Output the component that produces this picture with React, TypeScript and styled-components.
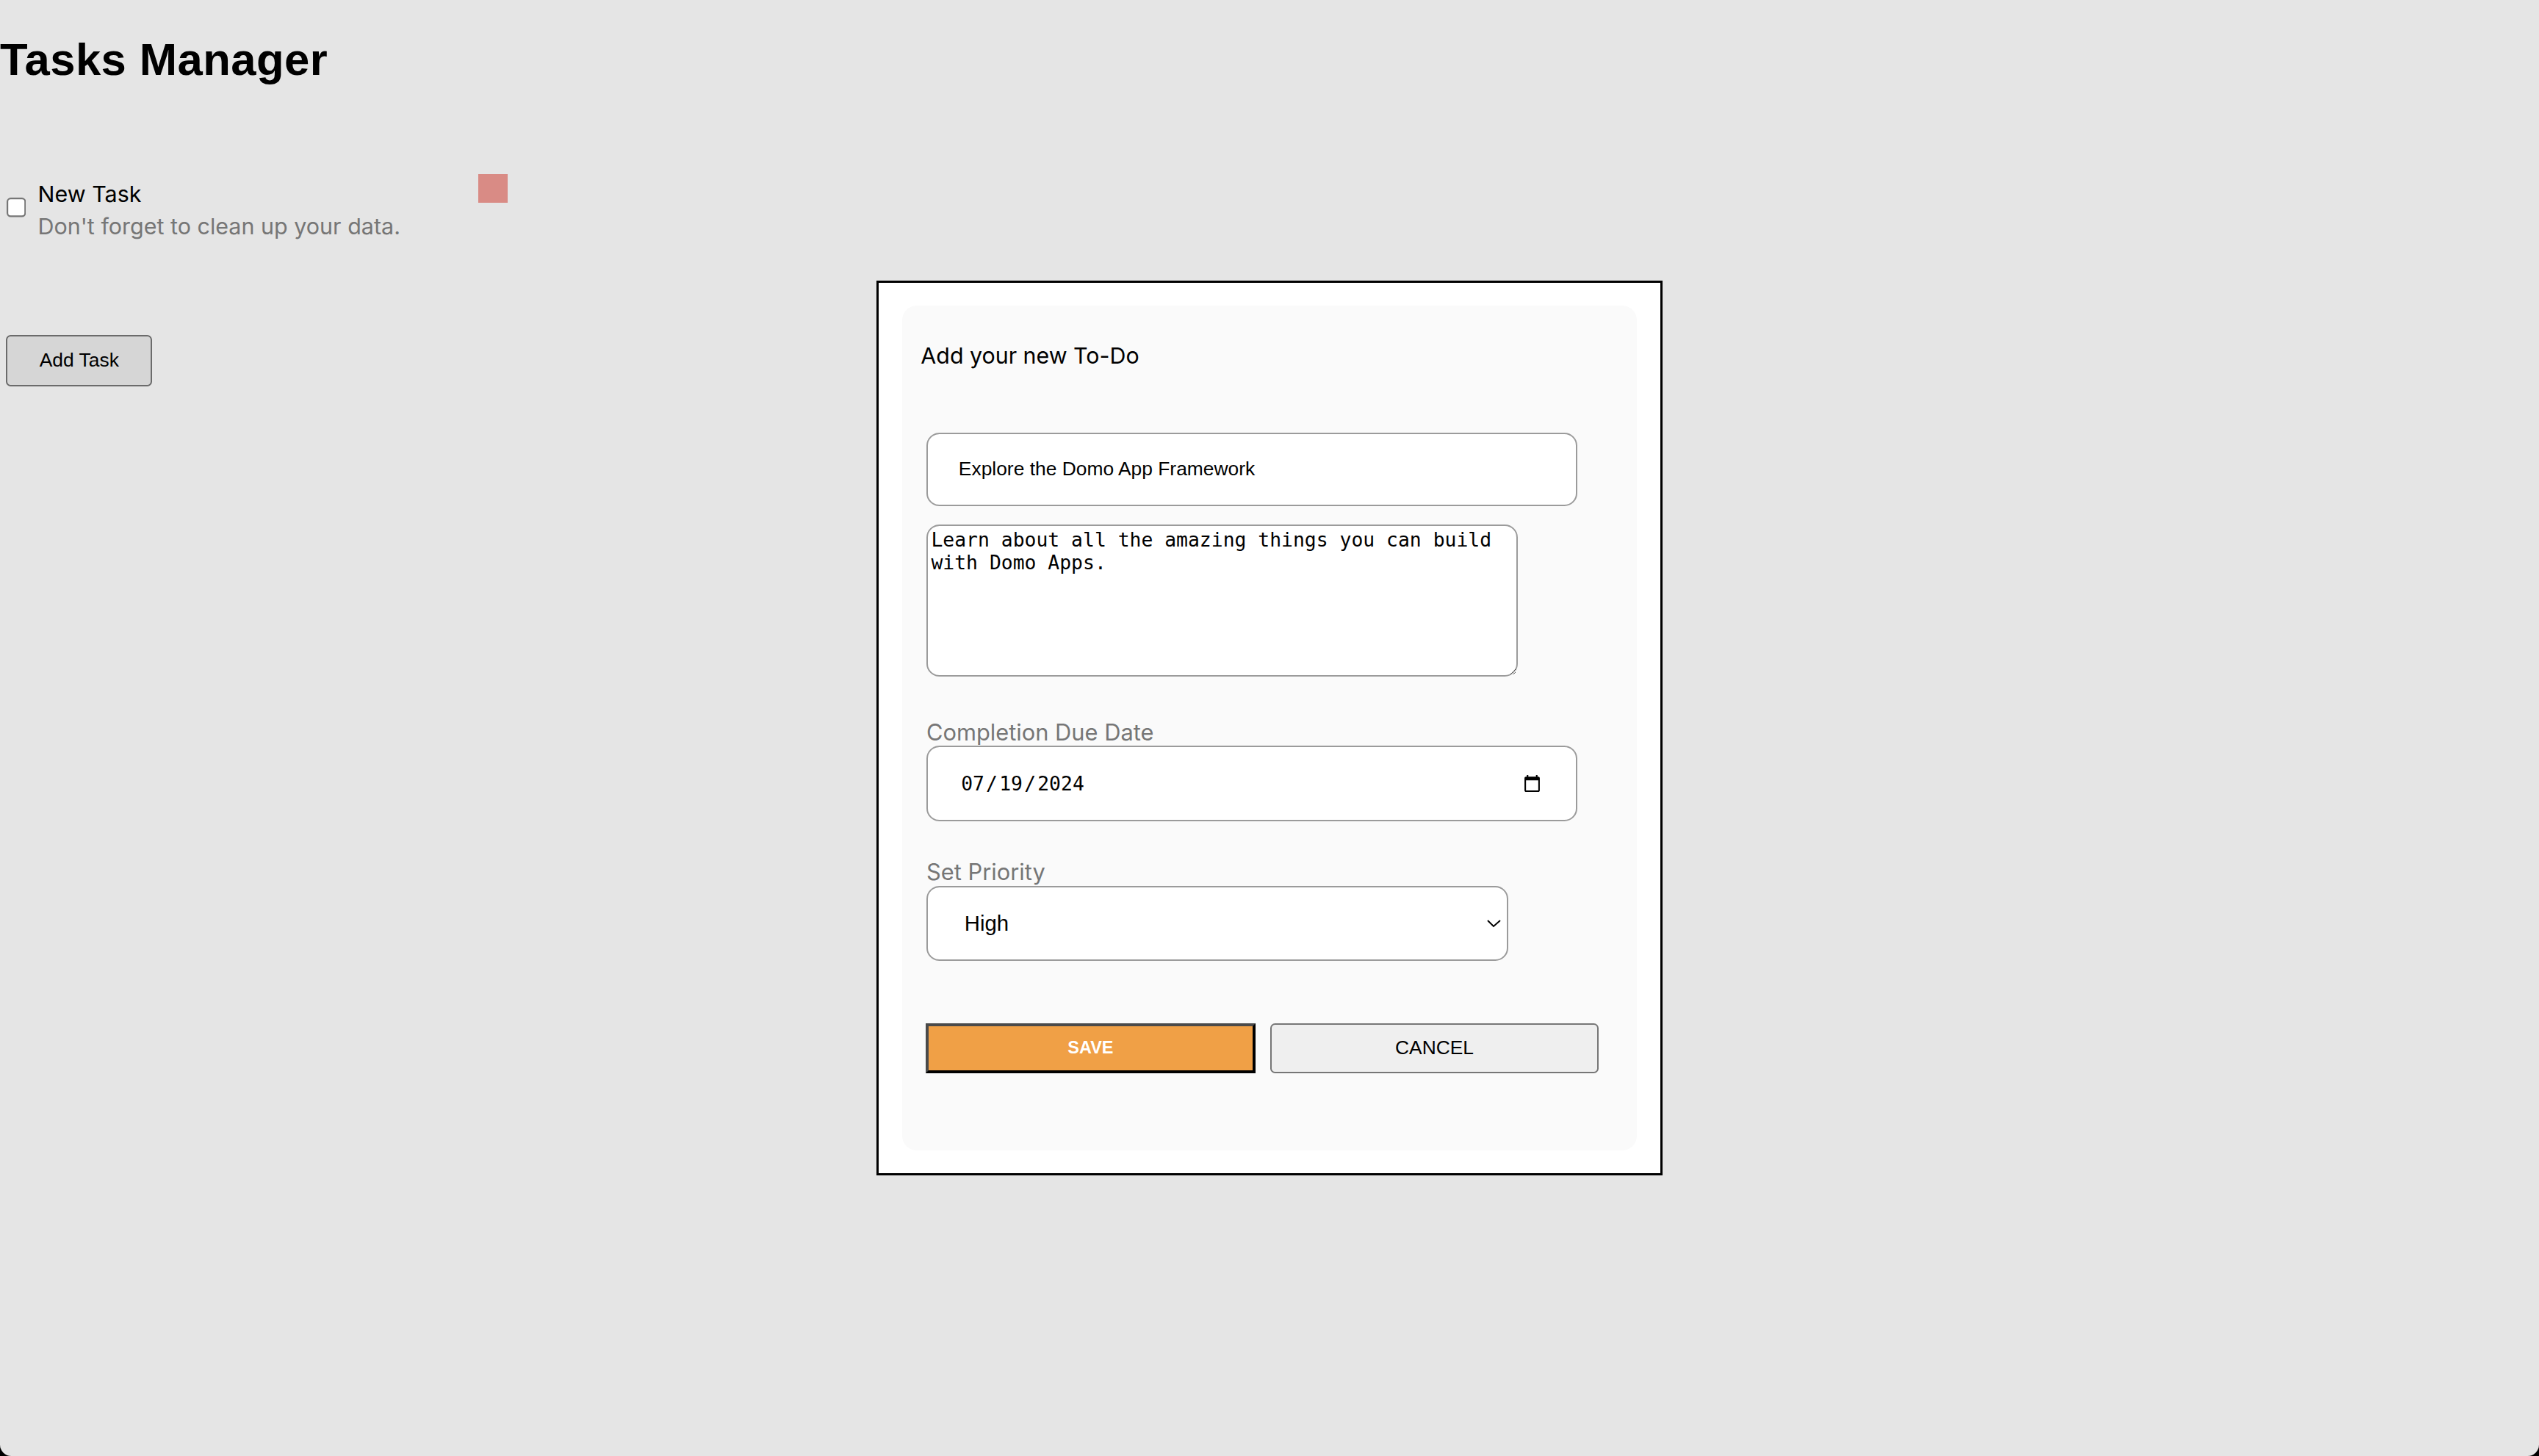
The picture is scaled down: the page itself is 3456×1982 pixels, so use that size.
import { FC } from 'react'
import styled, { createGlobalStyle } from 'styled-components'

// ==============================|| global ||============================== //
const GlobalStyle = createGlobalStyle`
  html {
    zoom: 2.2;
    background: #e5e5e5;
  }
  body {
    margin: 0;
    font-family: Inter, "Liberation Sans", sans-serif;
    color: #000;
  }
  * {
    box-sizing: border-box;
  }
`

// ==============================|| task list ||============================== //
const Page = styled.div`
  display: flex;
  flex-direction: column;
  align-items: flex-start;
`

const Title = styled.h1`
  margin: 21px 0 0;
  font-family: 'Liberation Sans', Arial, sans-serif;
  font-size: 28px;
  font-weight: 700;
  line-height: 32px;
  letter-spacing: 0.2px;
`

const TaskRow = styled.div`
  display: flex;
  align-items: center;
  width: 314px;
  min-height: 44.6px;
  margin-top: 54.6px;
`

const Check = styled.input`
  width: 13px;
  height: 13px;
  margin: 0 6.4px 3px 4px;
`

const TaskText = styled.div`
  display: flex;
  flex-direction: column;
  font-size: 13.85px;
  line-height: 20px;
`

const TaskName = styled.span`
  color: #000;
`

const TaskDesc = styled.span`
  color: #767676;
`

const Priority = styled.span<{ $color: string }>`
  width: 18px;
  height: 18px;
  margin-left: auto;
  align-self: flex-start;
  background: ${p => p.$color};
`

const AddButton = styled.button`
  width: 90.4px;
  height: 31.8px;
  margin: 55px 0 0 3.8px;
  padding: 0;
  font-family: 'Liberation Sans', Arial, sans-serif;
  font-size: 12px;
  color: #000;
  background: #d6d6d6;
  border: 1px solid #6b6b6b;
  border-radius: 3px;
`

// ==============================|| modal ||============================== //
const Overlay = styled.div`
  position: fixed;
  inset: 0;
  display: flex;
  align-items: center;
  justify-content: center;
`

const Modal = styled.div`
  background: #fff;
  border: 1.4px solid #000;
  padding: 14px 14.8px;
`

const Card = styled.form`
  width: 454.5px;
  height: 522.7px;
  padding: 22.2px 0 0 15px;
  display: flex;
  flex-direction: column;
  align-items: flex-start;
  background: #fafafa;
  border-radius: 9px;
`

const Heading = styled.h2`
  margin: 0 0 0 -3.5px;
  font-size: 13.8px;
  font-weight: 400;
  line-height: 18px;
  color: #000;
`

const FieldLabel = styled.label<{ $gap: number }>`
  display: block;
  margin-top: ${p => p.$gap}px;
  font-size: 14px;
  line-height: 17px;
  color: #767676;
`

const field = `
  display: block;
  border: 1px solid #9b9b9b;
  border-radius: 8px;
  background: #fff;
  color: #000;
  outline: none;
`

const TextInput = styled.input`
  ${field}
  width: 402.7px;
  height: 45.5px;
  margin-top: 38.4px;
  padding: 0 19px;
  font-family: 'Liberation Sans', Arial, sans-serif;
  font-size: 12px;
`

const TextArea = styled.textarea`
  ${field}
  width: 366px;
  height: 94px;
  margin-top: 11.4px;
  padding: 2px;
  font-family: 'DejaVu Sans Mono', 'Liberation Mono', monospace;
  font-size: 12px;
  line-height: 14px;
`

const DateInput = styled.input`
  ${field}
  width: 402.7px;
  height: 47px;
  padding: 0 19px 0 19.5px;
  font-family: 'DejaVu Sans Mono', 'Liberation Mono', monospace;
  font-size: 12px;
`

const Select = styled.select`
  ${field}
  width: 360px;
  height: 46.4px;
  padding: 0 2px 0 19px;
  font-family: 'Liberation Sans', Arial, sans-serif;
  font-size: 13.33px;
`

const Actions = styled.div`
  display: flex;
  gap: 9px;
  margin-top: 38.6px;
  margin-left: -0.5px;
`

const SaveButton = styled.button`
  width: 204px;
  height: 31px;
  padding: 0;
  font-family: 'Liberation Sans', Arial, sans-serif;
  font-size: 10.67px;
  font-weight: 700;
  color: #fff;
  background: #f0a046;
  border: 2px solid;
  border-color: #4a4a4a #000 #000 #4a4a4a;
`

const CancelButton = styled.button`
  width: 203.6px;
  height: 31px;
  padding: 0;
  font-family: 'Liberation Sans', Arial, sans-serif;
  font-size: 12px;
  color: #000;
  background: #efefef;
  border: 1px solid #767676;
  border-radius: 3px;
`

const WindowCorners = styled.div`
  position: fixed;
  inset: 0;
  pointer-events: none;
  border-radius: 0 0 7px 7px;
  box-shadow: 0 0 0 20px #000;
`

// ==============================|| index ||============================== //
const App: FC = () => {
  return (
    <>
      <GlobalStyle />
      <Page>
        <Title>Tasks Manager</Title>

        <TaskRow>
          <Check type="checkbox" />
          <TaskText>
            <TaskName>New Task</TaskName>
            <TaskDesc>Don't forget to clean up your data.</TaskDesc>
          </TaskText>
          <Priority $color="#d98b85" />
        </TaskRow>

        <AddButton type="button">Add Task</AddButton>
      </Page>

      <Overlay>
        <Modal>
          <Card onSubmit={e => e.preventDefault()}>
            <Heading>Add your new To-Do</Heading>
            <TextInput type="text" defaultValue="Explore the Domo App Framework" />
            <TextArea defaultValue="Learn about all the amazing things you can build with Domo Apps." />

            <FieldLabel $gap={25.8} htmlFor="due">
              Completion Due Date
            </FieldLabel>
            <DateInput id="due" type="date" defaultValue="2024-07-19" />

            <FieldLabel $gap={22.6} htmlFor="priority">
              Set Priority
            </FieldLabel>
            <Select id="priority" defaultValue="high">
              <option value="low">Low</option>
              <option value="medium">Medium</option>
              <option value="high">High</option>
            </Select>

            <Actions>
              <SaveButton type="submit">SAVE</SaveButton>
              <CancelButton type="button">CANCEL</CancelButton>
            </Actions>
          </Card>
        </Modal>
      </Overlay>

      <WindowCorners />
    </>
  )
}

export default App
